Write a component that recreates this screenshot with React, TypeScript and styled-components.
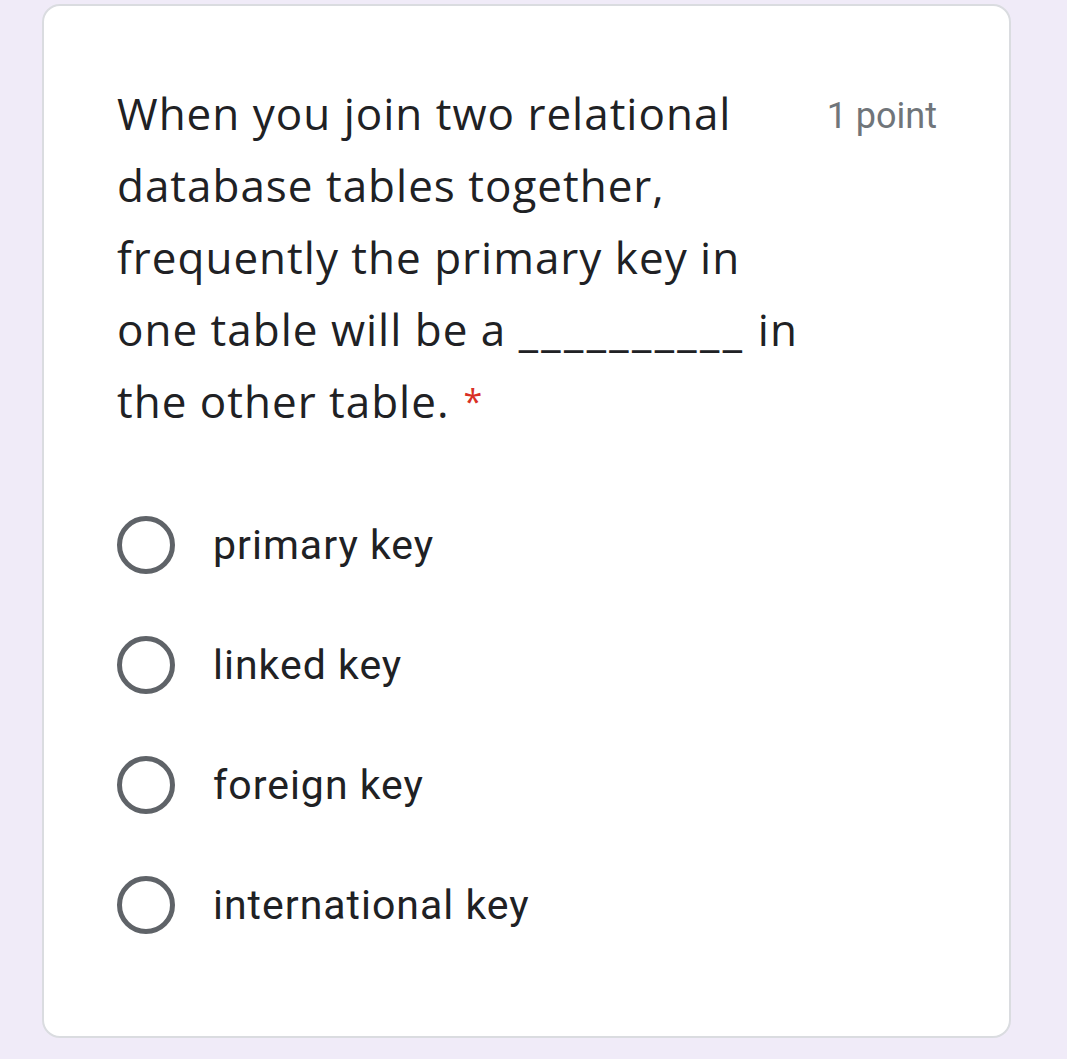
import { createGlobalStyle, styled } from "styled-components";

const Global = createGlobalStyle`
  html, body {
    margin: 0;
    padding: 0;
    background: #f0ebf8;
  }
`;

const Page = styled.div`
  padding: 4px 0 0 42px;
  min-height: 1059px;
  box-sizing: border-box;
`;

const Card = styled.div`
  width: 969px;
  height: 1034px;
  box-sizing: border-box;
  background: #fff;
  border: 2px solid #dadce0;
  border-radius: 18px;
  padding: 71px 72px 0 73px;
`;

const Header = styled.div`
  display: flex;
  justify-content: space-between;
  align-items: flex-start;
`;

const Question = styled.div`
  font-family: "Open Sans", sans-serif;
  font-size: 44px;
  letter-spacing: 1px;
  line-height: 72px;
  color: #202124;
  white-space: nowrap;
`;

// a little extra spacing so the ten underscores span the blank's width
const Blank = styled.span`
  letter-spacing: 3.4px;
`;

const Required = styled.span`
  color: #d93025;
  font-size: 34px;
  margin-left: 14px;
  vertical-align: 4px;
`;

const Points = styled.div`
  font-family: Roboto, sans-serif;
  font-size: 36px;
  line-height: 78px;
  color: #70757a;
  white-space: nowrap;
`;

const Options = styled.div`
  display: flex;
  flex-direction: column;
  gap: 62px;
  margin-top: 79px;
`;

const Option = styled.label`
  display: flex;
  align-items: center;
  gap: 38px;
  height: 58px;
`;

const Radio = styled.span`
  width: 58px;
  height: 58px;
  box-sizing: border-box;
  border: 5px solid #5f6368;
  border-radius: 50%;
  flex-shrink: 0;
`;

const OptionText = styled.span`
  font-family: Roboto, sans-serif;
  font-size: 41px;
  letter-spacing: 1px;
  color: #202124;
`;

const options = ["primary key", "linked key", "foreign key", "international key"];

export default function App() {
  return (
    <Page>
      <Global />
      <Card>
        <Header>
          <Question>
            When you join two relational
            <br />
            database tables together,
            <br />
            frequently the primary key in
            <br />
            one table will be a <Blank>__________</Blank> in
            <br />
            the other table.<Required>*</Required>
          </Question>
          <Points>1 point</Points>
        </Header>
        <Options>
          {options.map((o) => (
            <Option key={o}>
              <Radio />
              <OptionText>{o}</OptionText>
            </Option>
          ))}
        </Options>
      </Card>
    </Page>
  );
}
